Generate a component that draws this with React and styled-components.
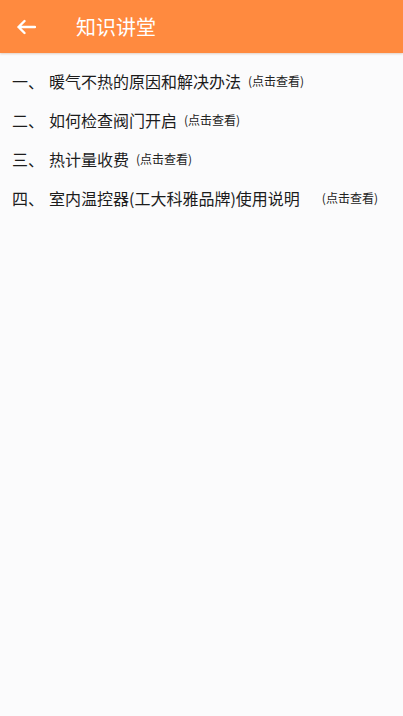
import React from 'react';
import styled, { createGlobalStyle } from 'styled-components';

const GlobalStyle = createGlobalStyle`
  html, body {
    margin: 0;
    padding: 0;
    background: #fbfbfc;
  }
  body {
    font-family: "Noto Sans CJK SC", "Noto Sans", sans-serif;
  }
`;

const Page = styled.div`
  width: 403px;
  min-height: 716px;
  background: #fbfbfc;
`;

const Header = styled.header`
  height: 53px;
  background: #ff8a3f;
  display: flex;
  align-items: center;
  box-shadow: 0 1px 2px rgba(150, 80, 30, 0.25);
`;

const BackButton = styled.div`
  width: 76px;
  height: 53px;
  display: flex;
  align-items: center;
  padding-left: 16px;
  box-sizing: border-box;
`;

const Title = styled.h1`
  margin: 0;
  font-size: 20px;
  font-weight: 400;
  color: #ffffff;
  line-height: 1;
  padding-top: 1px;
`;

const List = styled.ul`
  list-style: none;
  margin: 0;
  padding: 8px 0 0 12px;
`;

const Item = styled.li`
  height: 39px;
  display: flex;
  align-items: center;
  color: #1c1c1c;
`;

const Index = styled.span`
  font-size: 16px;
  width: 37px;
  flex-shrink: 0;
`;

const Topic = styled.span`
  font-size: 16px;
  white-space: nowrap;
`;

const Hint = styled.span`
  font-size: 12px;
  margin-left: ${p => p.$gap}px;
  color: #222;
  white-space: nowrap;
`;

const BackArrow = () => (
  <svg width="20" height="16" viewBox="0 0 20 16" fill="none">
    <path
      d="M19 8H2.5M8.5 2L2.5 8l6 6"
      stroke="#fff"
      strokeWidth="2.4"
      strokeLinecap="round"
      strokeLinejoin="round"
    />
  </svg>
);

const topics = [
  { no: '一、', text: '暖气不热的原因和解决办法', gap: 7 },
  { no: '二、', text: '如何检查阀门开启', gap: 7 },
  { no: '三、', text: '热计量收费', gap: 7 },
  { no: '四、', text: '室内温控器(工大科雅品牌)使用说明', gap: 22 },
];

export default function App() {
  return (
    <Page>
      <GlobalStyle />
      <Header>
        <BackButton>
          <BackArrow />
        </BackButton>
        <Title>知识讲堂</Title>
      </Header>
      <List>
        {topics.map(t => (
          <Item key={t.no}>
            <Index>{t.no}</Index>
            <Topic>{t.text}</Topic>
            <Hint $gap={t.gap}>(点击查看)</Hint>
          </Item>
        ))}
      </List>
    </Page>
  );
}
